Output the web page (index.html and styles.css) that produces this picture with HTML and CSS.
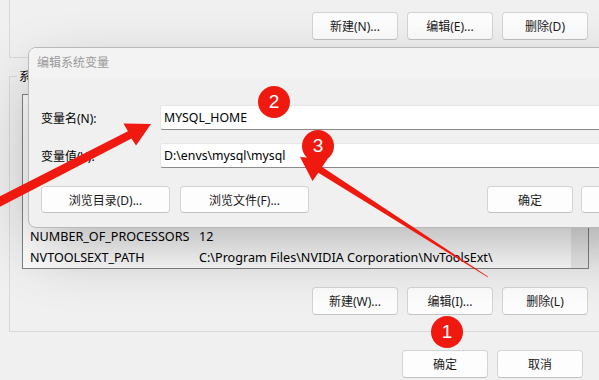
FILE: index.html
```html
<!doctype html>
<html lang="zh-CN">
<head>
    <meta charset="utf-8">
    <title>环境变量</title>
    <link rel="stylesheet" href="styles.css">
</head>
<body>
<div class="env">
    <div class="user-group">
        <div class="btn-row">
            <button class="btn">新建(N)...</button>
            <button class="btn">编辑(E)...</button>
            <button class="btn">删除(D)</button>
        </div>
    </div>

    <fieldset class="sys-group">
        <legend>系统变量(S)</legend>
        <div class="list">
            <div class="rows">
                <div class="row"><span class="name">JAVA_HOME</span><span>D:\envs\java\jdk</span></div>
                <div class="row"><span class="name">MYSQL_HOME</span><span>D:\envs\mysql\mysql</span></div>
                <div class="row"><span class="name">NUMBER_OF_PROCESSORS</span><span>12</span></div>
                <div class="row"><span class="name">NVTOOLSEXT_PATH</span><span>C:\Program Files\NVIDIA Corporation\NvToolsExt\</span></div>
            </div>
            <div class="scrollbar"></div>
        </div>
        <div class="btn-row">
            <button class="btn">新建(W)...</button>
            <button class="btn">编辑(I)...</button>
            <button class="btn">删除(L)</button>
        </div>
    </fieldset>

    <div class="btn-row footer">
        <button class="btn">确定</button>
        <button class="btn">取消</button>
    </div>
</div>

<!-- 编辑系统变量 对话框 -->
<div class="dialog">
    <div class="title">编辑系统变量</div>
    <div class="dialog-body">
        <div class="fields">
            <label>变量名(N):</label>
            <div class="input">MYSQL_HOME</div>
            <label>变量值(V):</label>
            <div class="input">D:\envs\mysql\mysql</div>
        </div>
        <div class="dialog-buttons">
            <button class="btn wide">浏览目录(D)...</button>
            <button class="btn wide">浏览文件(F)...</button>
            <button class="btn ok">确定</button>
            <button class="btn">取消</button>
        </div>
    </div>
</div>

<!-- 标注 -->
<svg class="marks" width="599" height="380" viewBox="0 0 599 380">
    <polygon fill="#f0190f" points="-42.3,217.6 127.9,131.3 123.5,123.5 151,124 136,145.5 131.5,138.5 -37.7,226.4"/>
    <polygon fill="#f0190f" points="300,157 327.5,159 322.1,166.9 488.2,276.7 487.8,277.3 318.3,172.8 312.5,181"/>
</svg>
<div class="badge b1">1</div>
<div class="badge b2">2</div>
<div class="badge b3">3</div>
</body>
</html>
```

FILE: styles.css
```css
html, body {
    margin: 0;
    width: 599px;
    height: 380px;
    overflow: hidden;
}
body {
    position: relative;
    background-color: #f0f0f0;
    font-family: "Noto Sans", "Noto Sans CJK SC", sans-serif;
    font-size: 12px;
    color: #000;
}

.env {
    padding-left: 9px;
}

.btn {
    box-sizing: border-box;
    width: 86px;
    height: 28px;
    padding: 0;
    font-family: inherit;
    font-size: 12px;
    color: #1a1a1a;
    background-color: #fdfdfd;
    border: 1px solid #d4d4d4;
    border-bottom-color: #c2c2c2;
    border-radius: 4px;
}
.btn-row {
    display: flex;
    justify-content: flex-end;
    gap: 9px;
}

.user-group {
    box-sizing: border-box;
    width: 601px;
    height: 58px;
    padding: 12px 22px 0 0;
    border-left: 1px solid #d9d9d9;
    border-bottom: 1px solid #d9d9d9;
}

.sys-group {
    box-sizing: border-box;
    width: 601px;
    margin: 10px 0 0 0;
    padding: 9px 21px 16px 12px;
    border: 1px solid #d9d9d9;
    border-radius: 0;
}
.sys-group legend {
    margin-left: -5px;
    padding: 0 2px;
    line-height: 17px;
}

.list {
    display: flex;
    height: 175px;
    margin-right: -1px;
    background-color: #fff;
    border: 1px solid #828282;
    box-sizing: border-box;
}
.rows {
    flex: 1;
    display: flex;
    flex-direction: column;
    justify-content: flex-end;
    font-size: 12.6px;
}
.row {
    display: flex;
    height: 21px;
    line-height: 21px;
    padding-left: 7px;
    white-space: nowrap;
}
.row .name {
    width: 169px;
}
.scrollbar {
    width: 17px;
    background-color: #ececec;
}
.sys-group .btn-row {
    margin-top: 18px;
}

.footer {
    margin-top: 18px;
    padding-right: 16px;
}

/* dialog */
.dialog {
    position: absolute;
    left: 28px;
    top: 47px;
    width: 640px;
    height: 181px;
    box-sizing: border-box;
    background-color: #f0f0f0;
    border: 1px solid #b9b9b9;
    border-radius: 8px;
    box-shadow: 0 24px 64px -8px rgba(0, 0, 0, 0.32);
    overflow: hidden;
}
.title {
    height: 30px;
    line-height: 30px;
    padding-left: 8px;
    color: #9a9a9a;
    background-color: #f3f3f3;
}
.dialog-body {
    padding: 27px 0 0 12px;
}
.fields {
    display: grid;
    grid-template-columns: 119px 1fr;
    row-gap: 13px;
    align-items: center;
}
.input {
    box-sizing: border-box;
    height: 25px;
    line-height: 23px;
    padding-left: 3px;
    background-color: #fff;
    border: 1px solid #e6e6e6;
    border-bottom-color: #8a8a8a;
    border-radius: 3px 0 0 3px;
    font-size: 12.3px;
}
.dialog-buttons {
    display: flex;
    gap: 10px;
    margin-top: 18px;
}
.btn.wide {
    width: 129px;
    height: 27px;
}
.dialog-buttons .btn {
    height: 27px;
}
.btn.ok {
    margin-left: auto;
    margin-right: -2px;
}

/* annotations */
.marks {
    position: absolute;
    left: 0;
    top: 0;
}
.badge {
    position: absolute;
    width: 32px;
    height: 32px;
    border-radius: 50%;
    background-color: #f0190f;
    color: #fff;
    font-family: "Liberation Sans", Arial, sans-serif;
    font-size: 19px;
    line-height: 32px;
    text-align: center;
}
.b1 { left: 431px; top: 316px; }
.b2 { left: 258px; top: 86px; }
.b3 { left: 302px; top: 130px; }
```
